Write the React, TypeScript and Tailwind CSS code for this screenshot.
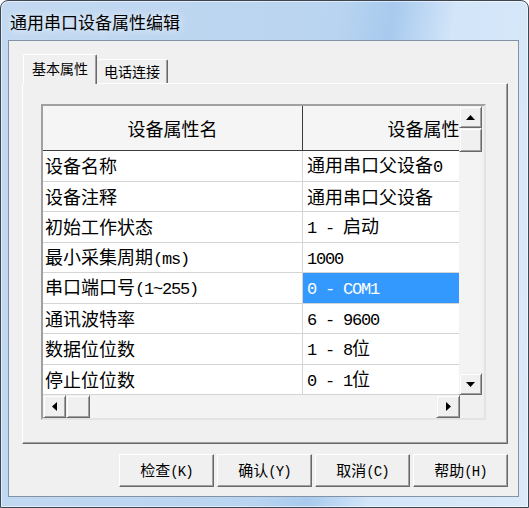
import React from 'react';

const cjk = "font-['Noto_Sans_CJK_SC',sans-serif]";

type Row = { name: string; value: string; selected?: boolean };

const rows: Row[] = [
  { name: '设备名称', value: '通用串口父设备0' },
  { name: '设备注释', value: '通用串口父设备' },
  { name: '初始工作状态', value: '1 - 启动' },
  { name: '最小采集周期(ms)', value: '1000' },
  { name: '串口端口号(1~255)', value: '0 - COM1', selected: true },
  { name: '通讯波特率', value: '6 - 9600' },
  { name: '数据位位数', value: '1 - 8位' },
  { name: '停止位位数', value: '0 - 1位' },
];

// ascii runs get a half-width mono face, like the SimSun latin glyphs
function Mixed({ text, latin }: { text: string; latin: string }) {
  const parts = text.split(/([\x20-\x7e]+)/);
  return (
    <span className="whitespace-pre">
      {parts.map((p, i) =>
        /^[\x20-\x7e]+$/.test(p) ? (
          <span key={i} className={latin}>
            {p}
          </span>
        ) : (
          p
        ),
      )}
    </span>
  );
}

const cellLatin = "font-['Liberation_Mono',monospace] text-[17px] tracking-[-1.2px]";
const btnLatin = "font-['Liberation_Mono',monospace] text-[14px] tracking-[-0.9px]";

function Arrow({ dir }: { dir: 'up' | 'down' | 'left' | 'right' }) {
  const pts = {
    up: '0,5 9,5 4.5,0',
    down: '0,0 9,0 4.5,5',
    left: '5,0 5,9 0,4.5',
    right: '0,0 0,9 5,4.5',
  }[dir];
  const vertical = dir === 'up' || dir === 'down';
  return (
    <svg width={vertical ? 9 : 5} height={vertical ? 5 : 9}>
      <polygon points={pts} fill="#000" />
    </svg>
  );
}

function ScrollButton({ dir, className }: { dir: 'up' | 'down' | 'left' | 'right'; className: string }) {
  return (
    <div
      className={`${className} flex items-center justify-center bg-[#f0f0f0] border border-t-[#f0f0f0] border-l-[#f0f0f0] border-r-[#696969] border-b-[#696969] shadow-[inset_1px_1px_0_#fff,inset_-1px_-1px_0_#a0a0a0]`}
    >
      <Arrow dir={dir} />
    </div>
  );
}

function Thumb({ className }: { className: string }) {
  return (
    <div
      className={`${className} bg-[#f0f0f0] border border-t-[#f0f0f0] border-l-[#f0f0f0] border-r-[#696969] border-b-[#696969] shadow-[inset_1px_1px_0_#fff,inset_-1px_-1px_0_#a0a0a0]`}
    />
  );
}

function DialogButton({ label }: { label: string }) {
  return (
    <div className="w-[95px] h-[33px] flex items-center justify-center bg-[#f0f0f0] text-[15px] text-black border border-t-white border-l-white border-r-[#696969] border-b-[#696969] shadow-[inset_-1px_-1px_0_#a0a0a0]">
      <Mixed text={label} latin={btnLatin} />
    </div>
  );
}

function PropertyGrid() {
  return (
    <div className="w-[445px] h-[316px] border-2 border-t-[#a0a0a0] border-l-[#a0a0a0] border-r-[#e3e3e3] border-b-[#e3e3e3] flex flex-col bg-[#f0f0f0]">
      <div className="flex h-[289px]">
        <div className="w-[416px] overflow-hidden flex flex-col bg-white">
          <div className="flex h-[45px] shrink-0 bg-[#f5f5f5] border-b border-[#3c3c3c] text-[18px] text-black">
            <div className="w-[260px] shrink-0 border-r border-[#3c3c3c] flex items-center justify-center">设备属性名</div>
            <div className="w-[241px] shrink-0 flex items-center justify-center">设备属性</div>
          </div>
          {rows.map((r) => (
            <div key={r.name} className="flex h-[30.5px] shrink-0 border-b border-[#d4d4d4] text-[18px] text-black">
              <div className="w-[260px] shrink-0 border-r border-[#d4d4d4] flex items-center pl-[2px] whitespace-nowrap">
                <Mixed text={r.name} latin={cellLatin} />
              </div>
              <div
                className={`w-[241px] shrink-0 flex items-center pl-[4px] whitespace-nowrap ${
                  r.selected ? 'bg-[#3399ff] text-white' : ''
                }`}
              >
                <Mixed text={r.value} latin={cellLatin} />
              </div>
            </div>
          ))}
        </div>
        <div className="w-[23px] flex flex-col bg-[#f3f3f3]">
          <ScrollButton dir="up" className="h-[22px] shrink-0" />
          <Thumb className="h-[24px] shrink-0" />
          <div className="flex-1" />
          <ScrollButton dir="down" className="h-[22px] shrink-0" />
        </div>
      </div>
      <div className="flex h-[23px]">
        <div className="w-[417px] flex bg-[#f3f3f3]">
          <ScrollButton dir="left" className="w-[23px] shrink-0" />
          <Thumb className="w-[24px] shrink-0" />
          <div className="flex-1" />
          <ScrollButton dir="right" className="w-[24px] shrink-0" />
        </div>
        <div className="flex-1 bg-[#f0f0f0]" />
      </div>
    </div>
  );
}

export default function App() {
  return (
    <div
      className={`w-[529px] h-[508px] flex flex-col rounded-t-[8px] border border-[#3e4651] bg-[linear-gradient(100deg,#c3d9f1_0%,#b9d4f0_55%,#a8caee_64%,#d2e5f9_74%,#dbe9f8_100%)] shadow-[inset_0_0_0_1px_rgba(255,255,255,0.55)] ${cjk}`}
    >
      <div className="h-[39px] shrink-0 flex items-center pl-[9px] pt-[2px] text-[17px] text-black [text-shadow:0_0_8px_#fff]">
        通用串口设备属性编辑
      </div>
      <div className="flex-1 ml-[7px] mr-[9px] mb-[10px] border border-[#8492a6] bg-[#f0f0f0] flex flex-col pl-[13px] pr-[10px] pt-[13px]">
        <div className="flex items-end h-[29px] text-[14px] text-black">
          <div className="relative z-10 ml-[1px] -mb-px w-[74px] h-[30px] bg-[#f0f0f0] rounded-t-[2px] border-t border-l border-r border-t-white border-l-white border-r-[#696969] shadow-[inset_-1px_0_0_#a0a0a0] flex items-center justify-center pb-[2px]">
            基本属性
          </div>
          <div className="w-[71px] h-[24px] bg-[#f0f0f0] rounded-t-[2px] border-t border-r border-t-white border-r-[#696969] shadow-[inset_-1px_0_0_#a0a0a0] flex items-center justify-center">
            电话连接
          </div>
        </div>
        <div className="h-[361px] shrink-0 border border-t-white border-l-white border-r-[#696969] border-b-[#696969] shadow-[inset_-1px_-1px_0_#a0a0a0] pl-[18px] pt-[20px]">
          <PropertyGrid />
        </div>
        <div className="flex justify-end gap-[3px] mt-[10px]">
          <DialogButton label="检查(K)" />
          <DialogButton label="确认(Y)" />
          <DialogButton label="取消(C)" />
          <DialogButton label="帮助(H)" />
        </div>
      </div>
    </div>
  );
}
